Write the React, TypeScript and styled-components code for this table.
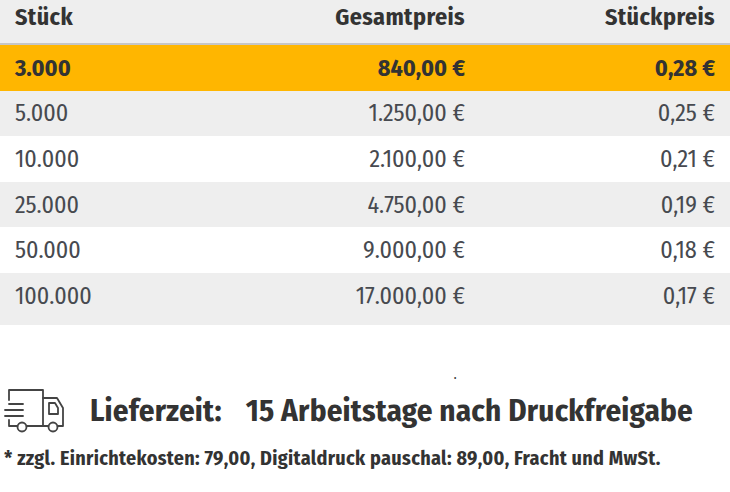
import React from "react";
import styled, { createGlobalStyle } from "styled-components";

const GlobalStyle = createGlobalStyle`
  html, body { margin: 0; padding: 0; background: #ffffff; }
  body { font-family: "Fira Sans Condensed", "Roboto Condensed", sans-serif; color: #3c3c3c; }
`;

const Page = styled.div`
  width: 730px;
  height: 492px;
  overflow: hidden;
`;

const Table = styled.div`
  display: grid;
  grid-template-columns: 235px 245px 250px;
`;

const Row = styled.div<{ $variant: "head" | "active" | "grey" | "white"; $last?: boolean }>`
  display: contents;
  & > div {
    background: ${(p) =>
      p.$variant === "active" ? "#ffb600" : p.$variant === "white" ? "#ffffff" : "#eeeeee"};
    height: ${(p) => (p.$variant === "head" ? "45px" : p.$last ? "52px" : "45.6px")};
    padding-bottom: ${(p) => (p.$variant === "head" ? "10px" : p.$last ? "6px" : "0")};
    border-bottom: ${(p) => (p.$variant === "head" ? "2px solid #c6c6c6" : "none")};
    font-weight: ${(p) => (p.$variant === "head" || p.$variant === "active" ? 700 : 400)};
    letter-spacing: ${(p) => (p.$variant === "head" ? "0.4px" : "0")};
    color: ${(p) => (p.$variant === "head" || p.$variant === "active" ? "#333333" : "#474a50")};
  }
`;

const Cell = styled.div<{ $align?: "left" | "right" }>`
  box-sizing: border-box;
  display: flex;
  align-items: center;
  justify-content: ${(p) => (p.$align === "right" ? "flex-end" : "flex-start")};
  padding: 0 15px;
  font-size: 24px;
  line-height: 1;
  white-space: nowrap;
`;

const Spacer = styled.div`
  height: 63px;
  padding-left: 454px;
  box-sizing: border-box;
`;

const Speck = styled.span`
  display: block;
  padding-top: 46px;
  font-size: 10px;
  line-height: 10px;
  color: #333;
  font-weight: 700;
`;

const Delivery = styled.div`
  display: flex;
  align-items: center;
  height: 46px;
  padding-left: 4px;
`;

const TruckIcon = styled.svg`
  width: 64px;
  height: 46px;
  flex: none;
`;

const DeliveryLabel = styled.span`
  margin-left: 22px;
  font-size: 31px;
  letter-spacing: 0.2px;
  font-weight: 700;
  color: #333333;
`;

const DeliveryValue = styled.span`
  margin-left: 24px;
  font-size: 31px;
  letter-spacing: 0.2px;
  font-weight: 700;
  color: #333333;
`;

const Footnote = styled.div`
  padding-left: 4px;
  margin-top: 12px;
  font-size: 20px;
  line-height: 24px;
  letter-spacing: 0.32px;
  font-weight: 700;
  color: #333333;
  white-space: nowrap;
`;

type Item = { qty: string; total: string; unit: string };
const items: Item[] = [
  { qty: "3.000", total: "840,00 €", unit: "0,28 €" },
  { qty: "5.000", total: "1.250,00 €", unit: "0,25 €" },
  { qty: "10.000", total: "2.100,00 €", unit: "0,21 €" },
  { qty: "25.000", total: "4.750,00 €", unit: "0,19 €" },
  { qty: "50.000", total: "9.000,00 €", unit: "0,18 €" },
  { qty: "100.000", total: "17.000,00 €", unit: "0,17 €" },
];

export default function App() {
  return (
    <Page>
      <GlobalStyle />
      <Table>
        <Row $variant="head">
          <Cell>Stück</Cell>
          <Cell $align="right">Gesamtpreis</Cell>
          <Cell $align="right">Stückpreis</Cell>
        </Row>
        {items.map((it, i) => (
          <Row
            key={it.qty}
            $variant={i === 0 ? "active" : i % 2 === 1 ? "grey" : "white"}
            $last={i === items.length - 1}
          >
            <Cell>{it.qty}</Cell>
            <Cell $align="right">{it.total}</Cell>
            <Cell $align="right">{it.unit}</Cell>
          </Row>
        ))}
      </Table>
      <Spacer>
        <Speck>.</Speck>
      </Spacer>
      <Delivery>
        <TruckIcon viewBox="0 0 64 46" fill="none" stroke="#444" strokeWidth="1.8" strokeLinecap="round" strokeLinejoin="round">
          <path d="M5 12 V2 H39 V38" />
          <path d="M22.5 38 H44.5" />
          <path d="M39 10 H53 L59 20 V38 H53.5" />
          <path d="M45 15 H51 L54 20 V26 H45 Z" />
          <path d="M5 16 H19" />
          <path d="M1 22 H19" />
          <path d="M1 28 H19" />
          <path d="M5 32 V38 H13.5" />
          <circle cx="18" cy="39" r="4.5" />
          <circle cx="49" cy="39" r="4.5" />
        </TruckIcon>
        <DeliveryLabel>Lieferzeit:</DeliveryLabel>
        <DeliveryValue>15 Arbeitstage nach Druckfreigabe</DeliveryValue>
      </Delivery>
      <Footnote>* zzgl. Einrichtekosten: 79,00, Digitaldruck pauschal: 89,00, Fracht und MwSt.</Footnote>
    </Page>
  );
}
